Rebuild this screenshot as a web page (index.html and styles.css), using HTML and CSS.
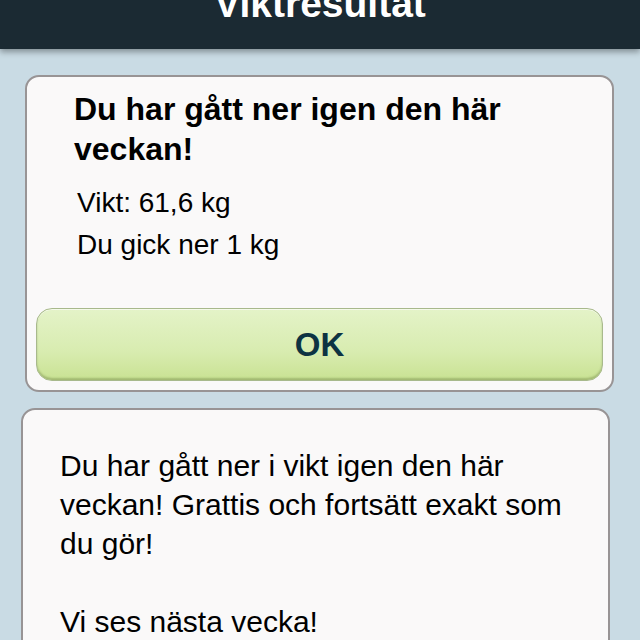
FILE: index.html
```html
<!DOCTYPE html>
<html lang="sv">
<head>
  <meta charset="UTF-8" />
  <meta name="viewport" content="width=device-width, initial-scale=1" />
  <title>Viktresultat</title>
  <link rel="stylesheet" href="styles.css">
</head>
<body>

  <!-- Titelrad -->
  <header class="topbar">
    <h1 class="topbar-title">Viktresultat</h1>
  </header>

  <!-- Resultatkort -->
  <section class="card card-result">
    <h2 class="result-title">Du har gått ner igen den här veckan!</h2>
    <div class="result-lines">
      <p>Vikt: 61,6 kg</p>
      <p>Du gick ner 1 kg</p>
    </div>
    <button class="ok-btn" type="button">OK</button>
  </section>

  <!-- Meddelande -->
  <section class="card card-message">
    <p>Du har gått ner i vikt igen den här veckan! Grattis och fortsätt exakt som du gör!</p>
    <p class="spaced">Vi ses nästa vecka!</p>
  </section>

</body>
</html>
```

FILE: styles.css
```css
/* Grund */
html, body {
  margin: 0;
  padding: 0;
  height: 100vh;
  overflow: hidden;
  background: #c9dbe4;
  color: #000;
  font-family: "Liberation Sans", Arial, sans-serif;
}

/* Titelrad */
.topbar {
  height: 49px;
  overflow: hidden;
  background: #1b2a33;
  box-shadow: 0 3px 6px rgba(0,0,0,0.35);
  text-align: center;
  position: relative;
  z-index: 2;
}
.topbar-title {
  margin: -16px 0 0;
  font-size: 39px;
  line-height: 39px;
  font-weight: bold;
  color: #fff;
  text-shadow: 0 -1px 0 rgba(0,0,0,0.5);
}

/* Kort */
.card {
  background: #faf9f9;
  border: 2px solid #989495;
  border-radius: 14px;
  box-sizing: border-box;
}
.card-result {
  margin: 26px 26px 0 25px;
  padding: 12px 9px 9px;
}
.card-message {
  margin: 16px 30px 0 21px;
  padding: 36px 37px 40px;
  font-size: 30px;
  line-height: 39px;
}
.card-message p {
  margin: 0;
}
.card-message .spaced {
  margin-top: 39px;
}

.result-title {
  margin: 0 0 0 38px;
  font-size: 32px;
  line-height: 40px;
  font-weight: bold;
}
.result-lines {
  margin: 13px 0 0 41px;
  font-size: 28px;
  line-height: 42px;
}
.result-lines p {
  margin: 0;
}

/* OK-knapp */
.ok-btn {
  display: block;
  width: 100%;
  height: 73px;
  margin-top: 42px;
  padding: 0;
  border: 1px solid #a8b98c;
  border-radius: 16px;
  background: linear-gradient(to bottom, #e4f3c8 0%, #d8ecb0 60%, #c9e293 100%);
  box-shadow: inset 0 -2px 2px rgba(90,110,50,0.35), inset 0 1px 0 rgba(255,255,255,0.6);
  font-family: "Liberation Sans", Arial, sans-serif;
  font-size: 33px;
  font-weight: bold;
  color: #0d3342;
  cursor: pointer;
}
```
